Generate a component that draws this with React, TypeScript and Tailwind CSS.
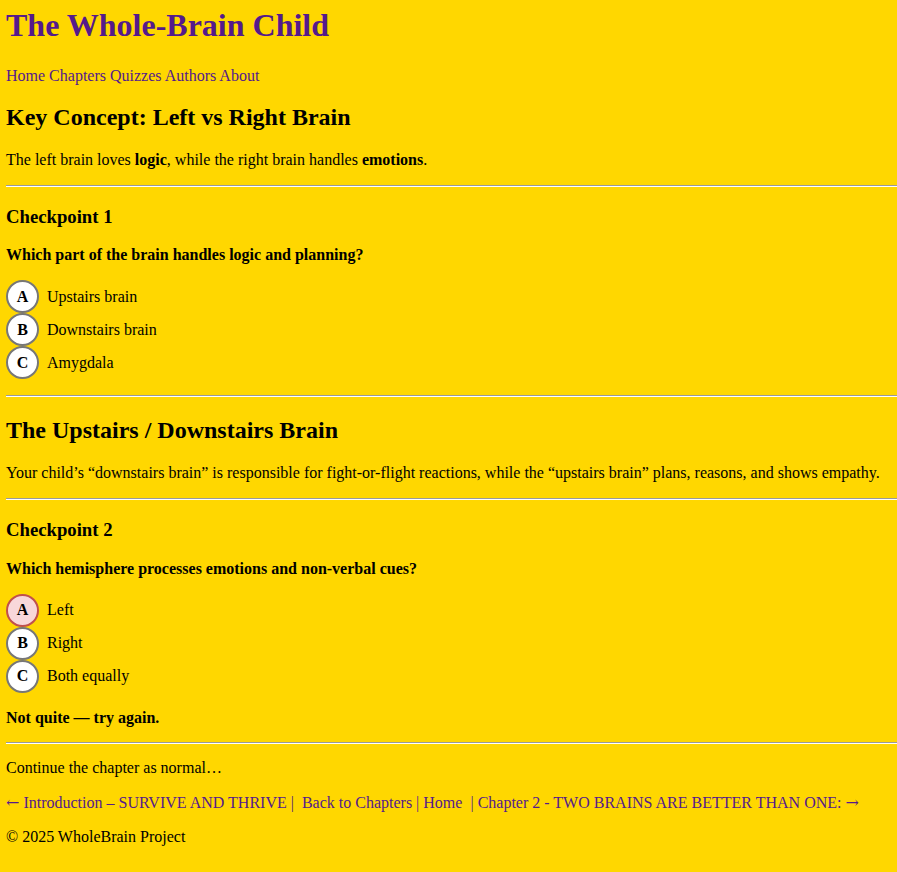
import React from 'react'

type Option = { key: string; label: string; wrong?: boolean }

const Divider: React.FC = () => (
  <hr className="h-0 border-0 border-t border-t-[#9a9a9a] border-b border-b-white" />
)

const Circle: React.FC<{ letter: string; wrong?: boolean }> = ({ letter, wrong }) => (
  <span
    className={`flex h-[33px] w-[33px] items-center justify-center rounded-full border-2 font-bold ${
      wrong ? 'border-[#c0504d] bg-[#f8d7da]' : 'border-[#777777] bg-white'
    }`}
  >
    {letter}
  </span>
)

const Checkpoint: React.FC<{ title: string; question: string; options: Option[] }> = ({
  title,
  question,
  options,
}) => (
  <div>
    <h3 className="mt-[18.72px] mb-[18.72px] text-[18.72px] font-bold leading-[normal]">{title}</h3>
    <p className="font-bold">{question}</p>
    <div className="mt-4 mb-4">
      {options.map((o) => (
        <div key={o.key} className="flex h-[33px] items-center gap-2">
          <Circle letter={o.key} wrong={o.wrong} />
          <span>{o.label}</span>
        </div>
      ))}
    </div>
  </div>
)

// arrows render wider in the reference, take them from DejaVu
const Arrow: React.FC<{ children: React.ReactNode }> = ({ children }) => (
  <span style={{ fontFamily: '"DejaVu Serif", serif' }}>{children}</span>
)

export default function App() {
  return (
    <div
      className="min-h-screen bg-[#ffd700] pl-[6px] pt-[7px] pb-6 text-[16px] leading-[normal] text-black"
      style={{ fontFamily: '"Liberation Serif", "Times New Roman", serif' }}
    >
      <h1 className="mb-[23px] text-[32px] font-bold leading-[normal] text-[#551a8b]">
        The Whole-Brain Child
      </h1>
      <nav className="text-[#551a8b]">
        <a href="#">Home</a> <a href="#">Chapters</a> <a href="#">Quizzes</a>{' '}
        <a href="#">Authors</a> <a href="#">About</a>
      </nav>

      <h2 className="mt-[19px] mb-[20px] text-[24px] font-bold leading-[normal]">
        Key Concept: Left vs Right Brain
      </h2>
      <p className="mb-4">
        The left brain loves <strong>logic</strong>, while the right brain handles{' '}
        <strong>emotions</strong>.
      </p>
      <Divider />

      <Checkpoint
        title="Checkpoint 1"
        question="Which part of the brain handles logic and planning?"
        options={[
          { key: 'A', label: 'Upstairs brain' },
          { key: 'B', label: 'Downstairs brain' },
          { key: 'C', label: 'Amygdala' },
        ]}
      />
      <Divider />

      <h2 className="mt-[20px] mb-[20px] text-[24px] font-bold leading-[normal]">
        The Upstairs / Downstairs Brain
      </h2>
      <p className="mb-4">
        Your child’s “downstairs brain” is responsible for fight-or-flight reactions, while the
        “upstairs brain” plans, reasons, and shows empathy.
      </p>
      <Divider />

      <Checkpoint
        title="Checkpoint 2"
        question="Which hemisphere processes emotions and non-verbal cues?"
        options={[
          { key: 'A', label: 'Left', wrong: true },
          { key: 'B', label: 'Right' },
          { key: 'C', label: 'Both equally' },
        ]}
      />
      <p className="mb-[15px] font-bold">Not quite — try again.</p>
      <Divider />

      <p className="mt-[15px] mb-4">Continue the chapter as normal…</p>
      <p className="mb-4 whitespace-pre text-[#551a8b]">
        <a href="#">
          <Arrow>←</Arrow> Introduction – SURVIVE AND THRIVE
        </a>
        {' |  '}
        <a href="#">Back to Chapters</a>
        {' | '}
        <a href="#">Home</a>
        {'  | '}
        <a href="#">
          Chapter 2 - TWO BRAINS ARE BETTER THAN ONE: <Arrow>→</Arrow>
        </a>
      </p>
      <footer className="my-4">© 2025 WholeBrain Project</footer>
    </div>
  )
}
